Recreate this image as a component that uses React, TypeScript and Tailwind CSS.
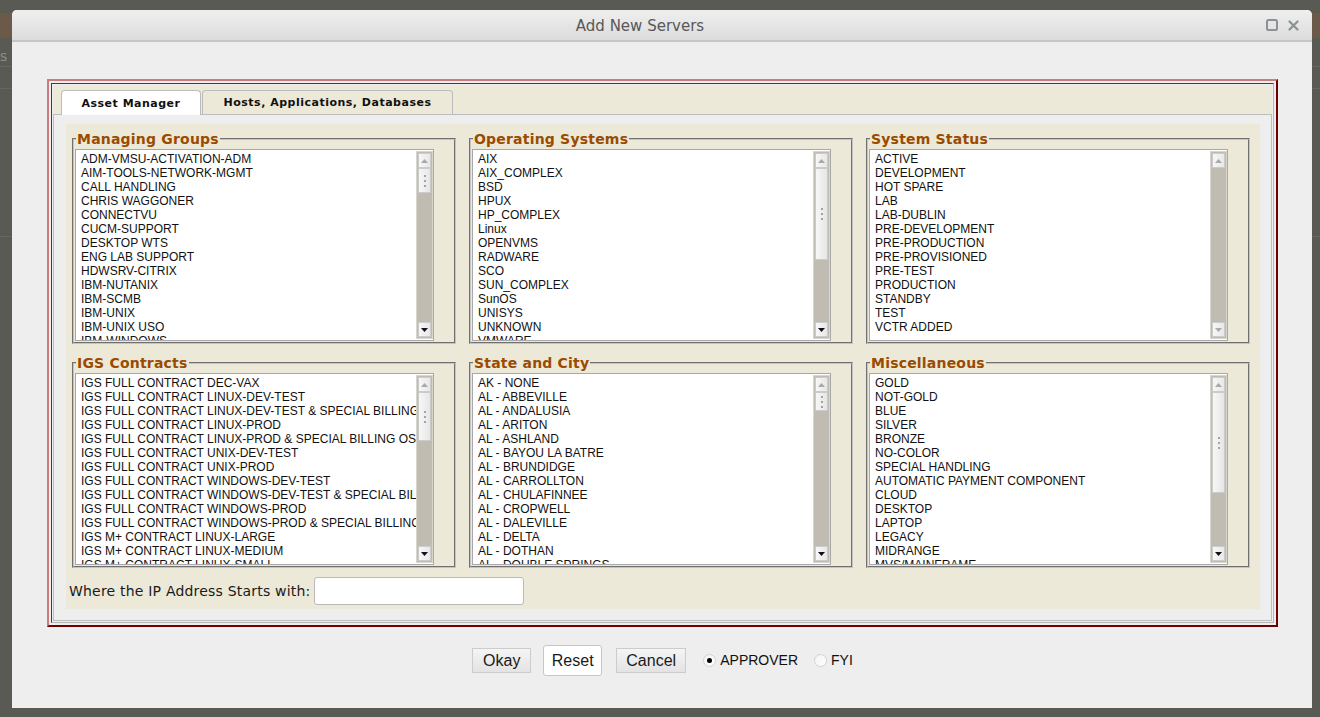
import React from 'react';

type ListDef = {
  title: string;
  items: string[];
  thumb: string | null;
};

const lists: ListDef[] = [
  {
    title: 'Managing Groups',
    thumb: 'h-[25px]',
    items: [
      'ADM-VMSU-ACTIVATION-ADM',
      'AIM-TOOLS-NETWORK-MGMT',
      'CALL HANDLING',
      'CHRIS WAGGONER',
      'CONNECTVU',
      'CUCM-SUPPORT',
      'DESKTOP WTS',
      'ENG LAB SUPPORT',
      'HDWSRV-CITRIX',
      'IBM-NUTANIX',
      'IBM-SCMB',
      'IBM-UNIX',
      'IBM-UNIX USO',
      'IBM-WINDOWS',
      'IBM-WINDOWS USO',
    ],
  },
  {
    title: 'Operating Systems',
    thumb: 'h-[92px]',
    items: [
      'AIX',
      'AIX_COMPLEX',
      'BSD',
      'HPUX',
      'HP_COMPLEX',
      'Linux',
      'OPENVMS',
      'RADWARE',
      'SCO',
      'SUN_COMPLEX',
      'SunOS',
      'UNISYS',
      'UNKNOWN',
      'VMWARE',
      'WINDOWS',
    ],
  },
  {
    title: 'System Status',
    thumb: null,
    items: [
      'ACTIVE',
      'DEVELOPMENT',
      'HOT SPARE',
      'LAB',
      'LAB-DUBLIN',
      'PRE-DEVELOPMENT',
      'PRE-PRODUCTION',
      'PRE-PROVISIONED',
      'PRE-TEST',
      'PRODUCTION',
      'STANDBY',
      'TEST',
      'VCTR ADDED',
    ],
  },
  {
    title: 'IGS Contracts',
    thumb: 'h-[49px]',
    items: [
      'IGS FULL CONTRACT DEC-VAX',
      'IGS FULL CONTRACT LINUX-DEV-TEST',
      'IGS FULL CONTRACT LINUX-DEV-TEST & SPECIAL BILLING OS',
      'IGS FULL CONTRACT LINUX-PROD',
      'IGS FULL CONTRACT LINUX-PROD & SPECIAL BILLING OS',
      'IGS FULL CONTRACT UNIX-DEV-TEST',
      'IGS FULL CONTRACT UNIX-PROD',
      'IGS FULL CONTRACT WINDOWS-DEV-TEST',
      'IGS FULL CONTRACT WINDOWS-DEV-TEST & SPECIAL BILLING OS',
      'IGS FULL CONTRACT WINDOWS-PROD',
      'IGS FULL CONTRACT WINDOWS-PROD & SPECIAL BILLING OS',
      'IGS M+ CONTRACT LINUX-LARGE',
      'IGS M+ CONTRACT LINUX-MEDIUM',
      'IGS M+ CONTRACT LINUX-SMALL',
      'IGS M+ CONTRACT UNIX-LARGE',
    ],
  },
  {
    title: 'State and City',
    thumb: 'h-[19px]',
    items: [
      'AK - NONE',
      'AL - ABBEVILLE',
      'AL - ANDALUSIA',
      'AL - ARITON',
      'AL - ASHLAND',
      'AL - BAYOU LA BATRE',
      'AL - BRUNDIDGE',
      'AL - CARROLLTON',
      'AL - CHULAFINNEE',
      'AL - CROPWELL',
      'AL - DALEVILLE',
      'AL - DELTA',
      'AL - DOTHAN',
      'AL - DOUBLE SPRINGS',
      'AL - ELBA',
    ],
  },
  {
    title: 'Miscellaneous',
    thumb: 'h-[101px]',
    items: [
      'GOLD',
      'NOT-GOLD',
      'BLUE',
      'SILVER',
      'BRONZE',
      'NO-COLOR',
      'SPECIAL HANDLING',
      'AUTOMATIC PAYMENT COMPONENT',
      'CLOUD',
      'DESKTOP',
      'LAPTOP',
      'LEGACY',
      'MIDRANGE',
      'MVS/MAINFRAME',
      'NETWORK',
    ],
  },
];

function Arrow({ up, on }: { up?: boolean; on?: boolean }) {
  return (
    <svg width="7" height="4" viewBox="0 0 7 4">
      <polygon points={up ? '0,4 3.5,0 7,4' : '0,0 7,0 3.5,4'} fill={on ? '#111' : '#a9a9a9'} />
    </svg>
  );
}

function Scrollbar({ thumb }: { thumb: string | null }) {
  return (
    <div className="my-px flex w-[17px] shrink-0 flex-col border border-[#d9d6ce] bg-[#c0bcb1] p-px">
      <div className="flex h-[15px] items-center justify-center border border-[#cbcbcb] bg-linear-to-r from-[#f7f7f7] to-[#e8e8e8]">
        <Arrow up />
      </div>
      {thumb && (
        <div
          className={`${thumb} flex flex-col items-center justify-center gap-[3px] border border-[#cbcbcb] bg-linear-to-r from-[#f7f7f7] to-[#e6e6e6]`}
        >
          <div className="h-[2px] w-[2px] bg-[#a3a3a3]" />
          <div className="h-[2px] w-[2px] bg-[#a3a3a3]" />
          <div className="h-[2px] w-[2px] bg-[#a3a3a3]" />
        </div>
      )}
      <div className="flex-1" />
      <div className="flex h-[15px] items-center justify-center border border-[#cbcbcb] bg-linear-to-r from-[#f7f7f7] to-[#e8e8e8]">
        <Arrow on={!!thumb} />
      </div>
    </div>
  );
}

function ListGroup({ def }: { def: ListDef }) {
  return (
    <fieldset className="min-w-0 border-2 border-[#c4c4c4] px-[1px] pt-[1px] pb-[1px] [border-style:groove]">
      <legend className="ml-[1px] px-[1px] font-['DejaVu_Sans',sans-serif] text-[14px] leading-[18px] font-bold tracking-[0.2px] text-[#9a4b00]">
        {def.title}
      </legend>
      <div className="flex h-[192px] w-[359px] border border-[#a8a8a8] bg-white">
        <div className="min-w-0 flex-1 overflow-hidden pt-[2px] pl-[5px] font-['Liberation_Sans',Arial,sans-serif] text-[12px] text-[#111]">
          {def.items.map((it) => (
            <div key={it} className="h-[14px] leading-[14px] whitespace-nowrap">
              {it}
            </div>
          ))}
        </div>
        <Scrollbar thumb={def.thumb} />
      </div>
    </fieldset>
  );
}

function Radio({ checked, label }: { checked?: boolean; label: string }) {
  return (
    <label className="flex items-center gap-[4px] font-['Liberation_Sans',Arial,sans-serif] text-[14px] text-[#111]">
      <span className="flex h-[13px] w-[13px] items-center justify-center rounded-full border border-[#d2d2d2] bg-linear-to-br from-[#f2f2f2] to-white">
        {checked && <span className="h-[5px] w-[5px] rounded-full bg-black" />}
      </span>
      {label}
    </label>
  );
}

export default function App() {
  return (
    <div className="relative h-[717px] w-[1320px] overflow-hidden bg-[#5a5a55]">
      {/* dimmed page behind the dialog */}
      <div className="mt-[13px] h-[25px] bg-[#6b5a4a]" />
      <div className="h-[29px] border-b border-[#666661] pt-[9px] font-['DejaVu_Sans',sans-serif] text-[14px] leading-[18px] text-[#8d8d88]">
        s
      </div>
      <div className="h-[22px] border-b border-[#666661]" />
      <div className="h-[148px] border-b border-[#666661]" />

      {/* dialog */}
      <div className="absolute top-[10px] left-[12px] flex h-[698px] w-[1300px] flex-col rounded-t-[5px] bg-[#eeeeee]">
        <div className="relative flex h-[32px] shrink-0 items-center justify-center rounded-t-[5px] border-b-2 border-[#c6c6c6] bg-linear-to-b from-[#efefef] to-[#dcdcdc] pt-[2px] pr-[44px]">
          <span className="font-['DejaVu_Sans',sans-serif] text-[15px] text-[#585858]">Add New Servers</span>
          <div className="absolute top-[9px] right-[13px] flex items-center gap-[10px]">
            <svg width="12" height="12" viewBox="0 0 12 12">
              <rect x="1" y="1" width="10" height="10" rx="1.5" fill="none" stroke="#8b9293" strokeWidth="2" />
            </svg>
            <svg width="11" height="11" viewBox="0 0 11 11">
              <path d="M1.5 1.5 L9.5 9.5 M9.5 1.5 L1.5 9.5" stroke="#8b9293" strokeWidth="2.2" strokeLinecap="round" />
            </svg>
          </div>
        </div>

        <div className="flex flex-1 flex-col pt-[37px] pr-[34px] pl-[35px]">
          {/* frame */}
          <div className="border-2 border-t-[#c97c7c] border-r-[#6e0000] border-b-[#6e0000] border-l-[#c97c7c] p-[2px]">
            <div className="border border-t-[#3e3e3e] border-r-[#b4b4b4] border-b-[#b4b4b4] border-l-[#3e3e3e] p-px">
              {/* tab strip */}
              <div className="flex items-end gap-px bg-[#ece9d8] pt-[5px] pl-[8px] font-['DejaVu_Sans',sans-serif] text-[11px] font-bold tracking-[0.5px] text-[#111]">
                <div className="relative z-10 -mb-px flex h-[25px] w-[140px] items-center justify-center rounded-t-[4px] border border-b-0 border-[#bcbcbc] bg-white pt-[2px]">
                  Asset Manager
                </div>
                <div className="flex h-[24px] w-[251px] items-center justify-center rounded-t-[4px] border border-b-0 border-[#bcbcbc] bg-[#ece9d8] pt-[2px]">
                  Hosts, Applications, Databases
                </div>
              </div>

              {/* panel */}
              <div className="border border-[#bdbdbd] bg-[#eeeeee] pt-[9px] pr-[11px] pb-[11px] pl-[12px]">
                <div className="bg-[#ece9d8] pt-[6px] pb-[4px]">
                  <div className="grid grid-cols-3 gap-x-[13px] gap-y-[10px] pr-[10px] pl-[6px]">
                    {lists.map((l) => (
                      <ListGroup key={l.title} def={l} />
                    ))}
                  </div>
                  <div className="mt-[9px] flex items-center gap-[4px] pl-[3px]">
                    <span className="font-['DejaVu_Sans',sans-serif] text-[14px] tracking-[0.2px] text-[#1a1a1a]">
                      Where the IP Address Starts with:
                    </span>
                    <input
                      type="text"
                      className="h-[28px] w-[210px] rounded-[3px] border border-[#b9b9b9] bg-white outline-none"
                    />
                  </div>
                </div>
              </div>
            </div>
          </div>

          {/* footer */}
          <div className="mt-[18px] flex items-center justify-center font-['Liberation_Sans',Arial,sans-serif] text-[16px] text-[#1a1a1a]">
            <button className="h-[25px] w-[59px] border border-[#cccccc] bg-linear-to-b from-[#f5f5f5] to-[#e3e3e3]">
              Okay
            </button>
            <button className="ml-[12px] h-[31px] w-[59px] rounded-[3px] border border-[#c6c6c6] bg-white">
              Reset
            </button>
            <button className="ml-[14px] h-[25px] w-[70px] border border-[#cccccc] bg-linear-to-b from-[#f5f5f5] to-[#e3e3e3]">
              Cancel
            </button>
            <div className="ml-[17px]">
              <Radio checked label="APPROVER" />
            </div>
            <div className="ml-[16px]">
              <Radio label="FYI" />
            </div>
          </div>
        </div>
      </div>
    </div>
  );
}
